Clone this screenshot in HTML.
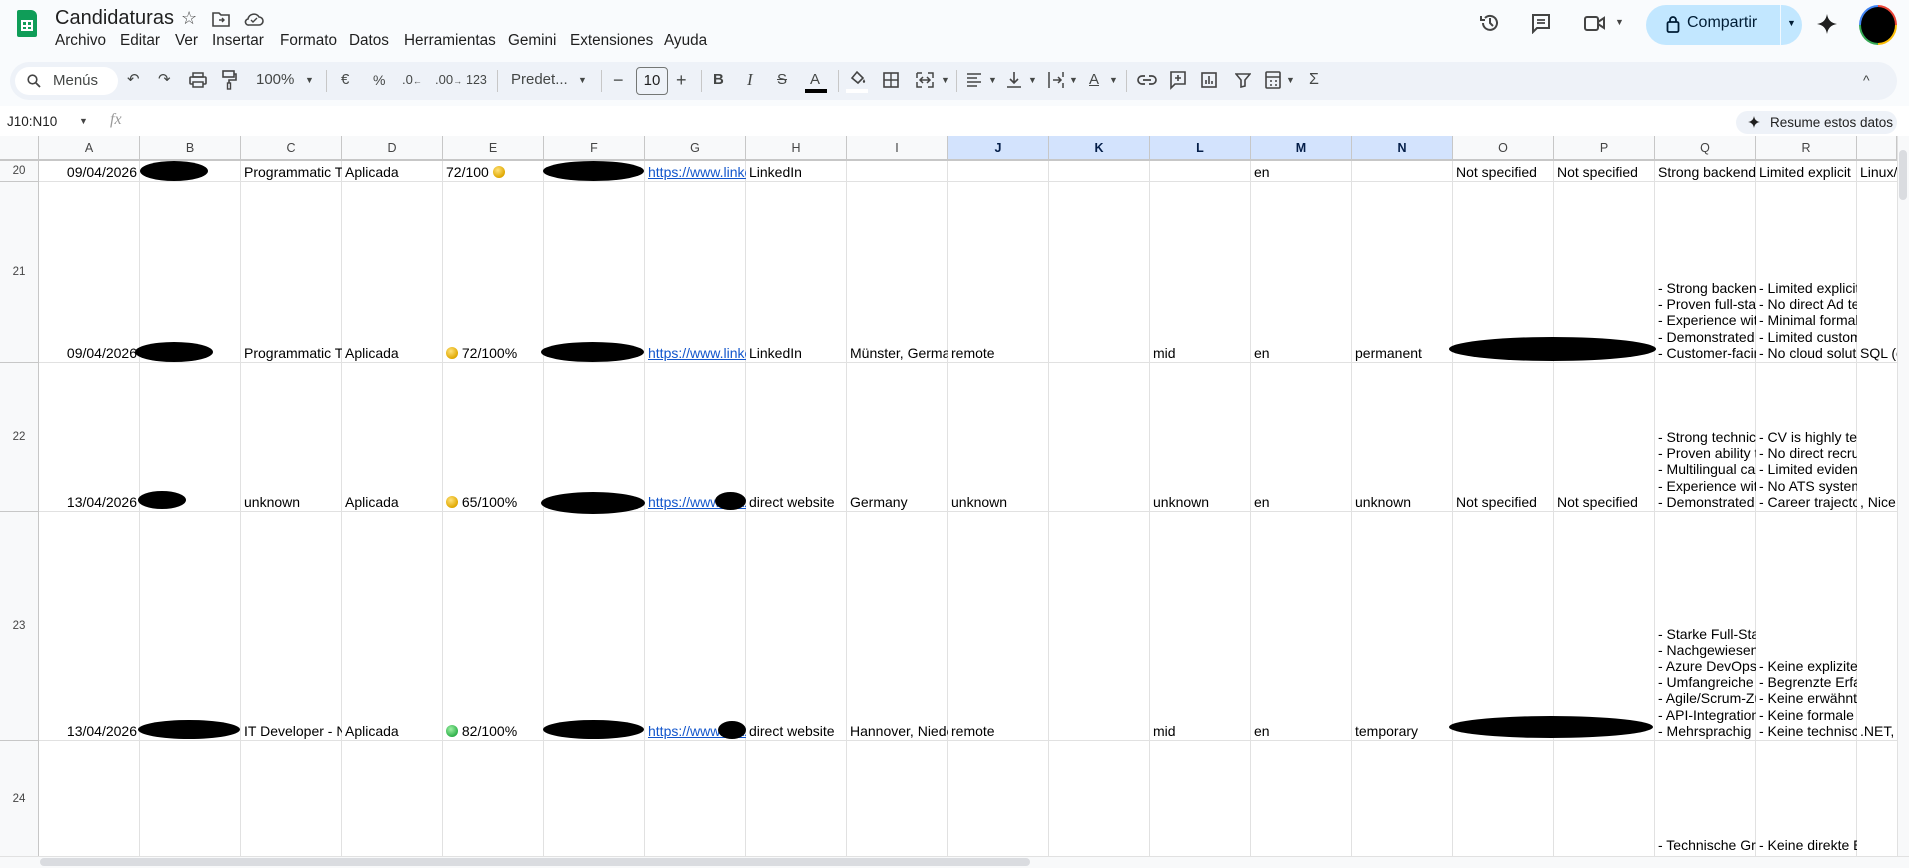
<!DOCTYPE html>
<html><head><meta charset="utf-8"><style>
*{box-sizing:border-box;margin:0;padding:0}
body{width:1909px;height:868px;overflow:hidden;background:#f9fbfd;font-family:"Liberation Sans",Arial,sans-serif;position:relative;color:#1f1f1f}
.a{position:absolute}
.mn{position:absolute;top:32px;font-size:15.3px;color:#1f1f1f}
.tb{position:absolute;top:68px;font-size:15px;color:#444746;line-height:24px;text-align:center}
.dd{position:absolute;top:68px;font-size:9px;color:#444746;line-height:24px}
.sep{position:absolute;top:70px;width:1px;height:22px;background:#c7c7c7}
.ch{position:absolute;top:136px;height:24px;width:101px;text-align:center;font-size:12.5px;color:#444;line-height:24px;border-right:1px solid #c7c7c7;background:#f8f9fa}
.ch.s{background:#d3e3fd;color:#041e49;font-weight:bold}
.rn{position:absolute;left:0;width:39px;font-size:11.5px;color:#444;display:flex;align-items:center;justify-content:center;background:#f8f9fa;border-right:1px solid #c7c7c7;border-bottom:1px solid #c7c7c7}
.c{position:absolute;width:101px;overflow:hidden;white-space:pre;display:flex;flex-direction:column;justify-content:flex-end;padding:0 3px 1px;line-height:16.2px;font-size:14px;color:#000}
.r{text-align:right}
.l{color:#1155cc;text-decoration:underline}
.b{position:absolute;background:#000;border-radius:50%}
.coin{display:inline-block;width:12px;height:12px;border-radius:50%;background:radial-gradient(circle at 40% 35%,#ffe27a,#e0a800 70%,#b88400);vertical-align:-1px}
.coin.g{background:radial-gradient(circle at 40% 35%,#9ef0a5,#2fb14a 70%,#1d7d33)}
.hl{position:absolute;left:0;width:1897px;height:1px;background:#e1e1e1}
</style></head><body>
<div class="a" style="left:17px;top:10px;width:20px;height:27px;background:#0f9d58;border-radius:2px 6px 2px 2px"></div>
<div class="a" style="left:21px;top:20px;width:12px;height:11px;border:2px solid #fff;background:linear-gradient(#fff,#fff) center/2px 100% no-repeat,linear-gradient(#fff,#fff) center/100% 2px no-repeat"></div>
<div class="a" style="left:55px;top:7px;font-size:20px;color:#1f1f1f">Candidaturas</div>
<div class="a" style="left:181px;top:8px;font-size:18px;color:#444">☆</div>
<svg class="a" style="left:212px;top:11px" width="18" height="16" viewBox="0 0 18 16"><path d="M1 2h6l2 2h8v11H1z" fill="none" stroke="#444" stroke-width="1.6"/><path d="M7 9h5M10 7l2 2-2 2" stroke="#444" stroke-width="1.4" fill="none"/></svg>
<svg class="a" style="left:244px;top:11px" width="20" height="16" viewBox="0 0 20 16"><path d="M5 14h10a4 4 0 0 0 0-8 6 6 0 0 0-11 2 3 3 0 0 0 1 6z" fill="none" stroke="#444" stroke-width="1.6"/><path d="M7 9l2 2 4-4" stroke="#444" stroke-width="1.4" fill="none"/></svg>
<div class="mn" style="left:55px">Archivo</div><div class="mn" style="left:120px">Editar</div><div class="mn" style="left:175px">Ver</div><div class="mn" style="left:212px">Insertar</div><div class="mn" style="left:280px">Formato</div><div class="mn" style="left:349px">Datos</div><div class="mn" style="left:404px">Herramientas</div><div class="mn" style="left:508px">Gemini</div><div class="mn" style="left:570px">Extensiones</div><div class="mn" style="left:664px">Ayuda</div>
<svg class="a" style="left:1479px;top:12px" width="22" height="22" viewBox="0 0 22 22"><path d="M4 11a7 7 0 1 0 2-5" fill="none" stroke="#444" stroke-width="2"/><path d="M2 4v4h4" fill="none" stroke="#444" stroke-width="2"/><path d="M11 6v5l3 3" fill="none" stroke="#444" stroke-width="2"/></svg>
<svg class="a" style="left:1530px;top:12px" width="22" height="22" viewBox="0 0 22 22"><path d="M3 3h16v13H7l-4 4z" fill="none" stroke="#444" stroke-width="2"/><path d="M7 8h8M7 11h8" stroke="#444" stroke-width="1.8"/></svg>
<svg class="a" style="left:1583px;top:14px" width="24" height="18" viewBox="0 0 24 18"><rect x="2" y="3" width="13" height="13" rx="2" fill="none" stroke="#444" stroke-width="2"/><path d="M15 8l6-4v10l-6-4" fill="none" stroke="#444" stroke-width="2"/></svg>
<div class="a" style="left:1615px;top:17px;font-size:9px;color:#444">▼</div>
<div class="a" style="left:1646px;top:5px;width:156px;height:40px;border-radius:20px;background:#c2e7ff"></div>
<div class="a" style="left:1780px;top:5px;width:1px;height:40px;background:#f0f8ff"></div>
<svg class="a" style="left:1666px;top:15px" width="14" height="18" viewBox="0 0 14 18"><rect x="1.5" y="7" width="11" height="10" rx="1.5" fill="none" stroke="#001d35" stroke-width="1.8"/><path d="M4 7V5a3 3 0 0 1 6 0v2" fill="none" stroke="#001d35" stroke-width="1.8"/></svg>
<div class="a" style="left:1687px;top:14px;font-size:16px;color:#001d35">Compartir</div>
<div class="a" style="left:1787px;top:18px;font-size:9px;color:#001d35">▼</div>
<svg class="a" style="left:1817px;top:14px" width="20" height="20" viewBox="0 0 20 20"><path d="M10 0C11 6 14 9 20 10 14 11 11 14 10 20 9 14 6 11 0 10 6 9 9 6 10 0z" fill="#1f1f1f"/></svg>
<div class="a" style="left:1859px;top:5px;width:38px;height:40px;border-radius:50%;background:conic-gradient(#ea4335 0 25%,#fbbc04 0 50%,#34a853 0 75%,#4285f4 0)"></div>
<div class="a" style="left:1861px;top:7px;width:34px;height:36px;border-radius:50%;background:#000"></div>
<div class="a" style="left:10px;top:62px;width:1887px;height:38px;border-radius:19px;background:#eef2f8"></div>
<div class="a" style="left:15px;top:67px;width:103px;height:28px;border-radius:14px;background:#fff"></div>
<svg class="a" style="left:27px;top:74px" width="14" height="14" viewBox="0 0 14 14"><circle cx="5.5" cy="5.5" r="4.3" fill="none" stroke="#444" stroke-width="1.6"/><path d="M9 9l4 4" stroke="#444" stroke-width="1.8"/></svg>
<div class="tb" style="left:53px;top:69px">Menús</div>
<div class="tb" style="left:127px">↶</div><div class="tb" style="left:158px">↷</div>
<svg class="a" style="left:189px;top:72px" width="18" height="16" viewBox="0 0 18 16"><rect x="1" y="5" width="16" height="7" rx="1" fill="none" stroke="#444" stroke-width="1.6"/><rect x="4" y="1" width="10" height="4" fill="none" stroke="#444" stroke-width="1.5"/><rect x="4" y="10" width="10" height="5" fill="#eef2f8" stroke="#444" stroke-width="1.5"/></svg>
<svg class="a" style="left:221px;top:70px" width="16" height="20" viewBox="0 0 16 20"><rect x="2" y="1" width="11" height="6" fill="none" stroke="#444" stroke-width="1.6"/><path d="M13 4h2v6H8v3" fill="none" stroke="#444" stroke-width="1.6"/><rect x="6.5" y="13" width="3" height="6" fill="none" stroke="#444" stroke-width="1.4"/></svg>
<div class="tb" style="left:256px">100%</div><div class="dd" style="left:305px">▼</div>
<div class="sep" style="left:326px"></div>
<div class="tb" style="left:341px">€</div><div class="tb" style="left:373px;font-size:14px">%</div>
<div class="tb" style="left:402px;font-size:13px">.0<span style="font-size:9px">←</span></div>
<div class="tb" style="left:435px;font-size:13px">.00<span style="font-size:9px">→</span></div>
<div class="tb" style="left:466px;font-size:12.5px">123</div>
<div class="sep" style="left:497px"></div>
<div class="tb" style="left:511px">Predet...</div><div class="dd" style="left:578px">▼</div>
<div class="sep" style="left:601px"></div>
<div class="tb" style="left:613px;font-size:18px">−</div>
<div class="a" style="left:636px;top:67px;width:32px;height:28px;border:1px solid #747775;border-radius:4px;font-size:15px;text-align:center;line-height:26px;color:#1f1f1f">10</div>
<div class="tb" style="left:676px;font-size:18px">+</div>
<div class="sep" style="left:701px"></div>
<div class="tb" style="left:713px;font-weight:bold">B</div>
<div class="tb" style="left:747px;font-style:italic;font-family:'Liberation Serif',serif;font-size:17px">I</div>
<div class="tb" style="left:777px;text-decoration:line-through">S</div>
<div class="tb" style="left:810px">A</div><div class="a" style="left:805px;top:89px;width:22px;height:4px;background:#000"></div>
<div class="sep" style="left:838px"></div>
<svg class="a" style="left:849px;top:70px" width="18" height="16" viewBox="0 0 18 16"><path d="M3 8l5-6 6 6-5 5z" fill="none" stroke="#444" stroke-width="1.6"/><path d="M15 9c1 2 2 3 0 4-2-1-1-2 0-4z" fill="#444"/></svg>
<div class="a" style="left:846px;top:89px;width:22px;height:4px;background:#fff"></div>
<svg class="a" style="left:883px;top:72px" width="16" height="16" viewBox="0 0 16 16"><rect x="1" y="1" width="14" height="14" fill="none" stroke="#444" stroke-width="1.6"/><path d="M8 1v14M1 8h14" stroke="#444" stroke-width="1.4"/></svg>
<svg class="a" style="left:916px;top:72px" width="18" height="16" viewBox="0 0 18 16"><path d="M1 1h5M12 1h5v5M17 10v5h-5M6 15H1v-5M1 6V1M4 8h10M11 5l3 3-3 3M7 5L4 8l3 3" fill="none" stroke="#444" stroke-width="1.5"/></svg>
<div class="dd" style="left:941px">▼</div>
<div class="sep" style="left:956px"></div>
<svg class="a" style="left:966px;top:72px" width="16" height="16" viewBox="0 0 16 16"><path d="M1 2h14M1 6h10M1 10h14M1 14h10" stroke="#444" stroke-width="1.6"/></svg><div class="dd" style="left:988px">▼</div>
<svg class="a" style="left:1006px;top:71px" width="16" height="18" viewBox="0 0 16 18"><path d="M8 1v11M4 8l4 4 4-4M1 16h14" fill="none" stroke="#444" stroke-width="1.6"/></svg><div class="dd" style="left:1028px">▼</div>
<svg class="a" style="left:1047px;top:71px" width="18" height="18" viewBox="0 0 18 18"><path d="M2 1v16M6 9h8M11 6l3 3-3 3M16 1v5M16 12v5" fill="none" stroke="#444" stroke-width="1.5"/></svg><div class="dd" style="left:1069px">▼</div>
<div class="tb" style="left:1089px;text-decoration:underline">A</div><div class="dd" style="left:1109px">▼</div>
<div class="sep" style="left:1126px"></div>
<svg class="a" style="left:1137px;top:74px" width="20" height="12" viewBox="0 0 20 12"><path d="M8 2H5a4 4 0 0 0 0 8h3M12 2h3a4 4 0 0 1 0 8h-3M6 6h8" fill="none" stroke="#444" stroke-width="1.7"/></svg>
<svg class="a" style="left:1169px;top:70px" width="18" height="20" viewBox="0 0 18 20"><path d="M2 2h14v12H6l-4 4z" fill="none" stroke="#444" stroke-width="1.6"/><path d="M9 5v6M6 8h6" stroke="#444" stroke-width="1.6"/></svg>
<svg class="a" style="left:1201px;top:72px" width="16" height="16" viewBox="0 0 16 16"><rect x="1" y="1" width="14" height="14" fill="none" stroke="#444" stroke-width="1.6"/><path d="M5 12V8M8 12V4M11 12V9" stroke="#444" stroke-width="1.6"/></svg>
<svg class="a" style="left:1235px;top:72px" width="16" height="16" viewBox="0 0 16 16"><path d="M1 2h14L10 8v6l-4 1V8z" fill="none" stroke="#444" stroke-width="1.6"/></svg>
<svg class="a" style="left:1264px;top:71px" width="18" height="18" viewBox="0 0 18 18"><rect x="2" y="1" width="14" height="16" rx="1" fill="none" stroke="#444" stroke-width="1.6"/><path d="M2 6h14M6 10h2M11 10h2M6 14h2M11 14h2" stroke="#444" stroke-width="1.6"/></svg><div class="dd" style="left:1286px">▼</div>
<div class="tb" style="left:1309px;font-size:16px">Σ</div>
<div class="tb" style="left:1863px;font-size:14px">^</div>
<div class="a" style="left:0;top:106px;width:1909px;height:30px;background:#fff"></div>
<div class="a" style="left:7px;top:114px;font-size:13.5px;color:#1f1f1f">J10:N10</div>
<div class="a" style="left:79px;top:116px;font-size:9px;color:#444">▼</div>
<div class="a" style="left:110px;top:111px;font-size:16px;color:#999;font-style:italic;font-family:'Liberation Serif',serif">fx</div>
<div class="a" style="left:1736px;top:111px;width:161px;height:23px;border-radius:12px;background:#eef2f8;font-size:13.5px;line-height:23px;padding-left:34px;color:#1f1f1f">Resume estos datos</div>
<svg class="a" style="left:1748px;top:116px" width="12" height="12" viewBox="0 0 20 20"><path d="M10 0C11 6 14 9 20 10 14 11 11 14 10 20 9 14 6 11 0 10 6 9 9 6 10 0z" fill="#1f1f1f"/></svg>
<div class="a" style="left:0;top:136px;width:1897px;height:720px;background:#fff"></div>
<div class="a" style="left:39px;top:160px;width:1858px;height:700px;background:repeating-linear-gradient(90deg,transparent 0 100px,#e1e1e1 100px 101px)"></div>
<div class="a" style="left:0;top:136px;width:39px;height:24px;background:#f8f9fa;border-right:1px solid #c7c7c7"></div>
<div class="ch" style="left:39px">A</div><div class="ch" style="left:140px">B</div><div class="ch" style="left:241px">C</div><div class="ch" style="left:342px">D</div><div class="ch" style="left:443px">E</div><div class="ch" style="left:544px">F</div><div class="ch" style="left:645px">G</div><div class="ch" style="left:746px">H</div><div class="ch" style="left:847px">I</div><div class="ch s" style="left:948px">J</div><div class="ch s" style="left:1049px">K</div><div class="ch s" style="left:1150px">L</div><div class="ch s" style="left:1251px">M</div><div class="ch s" style="left:1352px">N</div><div class="ch" style="left:1453px">O</div><div class="ch" style="left:1554px">P</div><div class="ch" style="left:1655px">Q</div><div class="ch" style="left:1756px">R</div><div class="ch" style="left:1857px;width:40px"></div>
<div class="a" style="left:0;top:159px;width:1897px;height:2px;background:#c7c7c7"></div>
<div class="hl" style="top:181px"></div><div class="hl" style="top:362px"></div><div class="hl" style="top:511px"></div><div class="hl" style="top:740px"></div>
<div class="rn" style="top:161px;height:21px">20</div>
<div class="rn" style="top:182px;height:181px">21</div>
<div class="rn" style="top:363px;height:149px">22</div>
<div class="rn" style="top:512px;height:229px">23</div>
<div class="rn" style="top:741px;height:115px;border-bottom:none">24</div>

<div class="c r" style="left:39px;top:161px;height:20px">09/04/2026</div>
<div class="c" style="left:241px;top:161px;height:20px">Programmatic Technical</div>
<div class="c" style="left:342px;top:161px;height:20px">Aplicada</div>
<div class="c" style="left:443px;top:161px;height:20px"><span>72/100 <span class="coin"></span></span></div>
<div class="c l" style="left:645px;top:161px;height:20px">https://www.linkedin</div>
<div class="c" style="left:746px;top:161px;height:20px">LinkedIn</div>
<div class="c" style="left:1251px;top:161px;height:20px">en</div>
<div class="c" style="left:1453px;top:161px;height:20px">Not specified</div>
<div class="c" style="left:1554px;top:161px;height:20px">Not specified</div>
<div class="c" style="left:1655px;top:161px;height:20px">Strong backend</div>
<div class="c" style="left:1756px;top:161px;height:20px">Limited explicit</div>
<div class="c" style="left:1857px;top:161px;height:20px;width:40px">Linux/De</div>
<div class="b" style="left:140px;top:161px;width:68px;height:20px"></div>
<div class="b" style="left:543px;top:161px;width:101px;height:20px"></div>

<div class="c r" style="left:39px;top:182px;height:180px">09/04/2026</div>
<div class="c" style="left:241px;top:182px;height:180px">Programmatic Technical</div>
<div class="c" style="left:342px;top:182px;height:180px">Aplicada</div>
<div class="c" style="left:443px;top:182px;height:180px"><span><span class="coin"></span> 72/100%</span></div>
<div class="c l" style="left:645px;top:182px;height:180px">https://www.linkedin</div>
<div class="c" style="left:746px;top:182px;height:180px">LinkedIn</div>
<div class="c" style="left:847px;top:182px;height:180px">Münster, Germany</div>
<div class="c" style="left:948px;top:182px;height:180px">remote</div>
<div class="c" style="left:1150px;top:182px;height:180px">mid</div>
<div class="c" style="left:1251px;top:182px;height:180px">en</div>
<div class="c" style="left:1352px;top:182px;height:180px">permanent</div>
<div class="c" style="left:1655px;top:182px;height:180px">- Strong backend
- Proven full-stack
- Experience with
- Demonstrated p
- Customer-facing</div>
<div class="c" style="left:1756px;top:182px;height:180px">- Limited explicit
- No direct Ad te
- Minimal formal
- Limited custom
- No cloud solution</div>
<div class="c" style="left:1857px;top:182px;height:180px;width:40px">SQL (c</div>
<div class="b" style="left:135px;top:342px;width:78px;height:20px"></div>
<div class="b" style="left:541px;top:342px;width:103px;height:20px"></div>
<div class="b" style="left:1449px;top:337px;width:207px;height:24px"></div>

<div class="c r" style="left:39px;top:363px;height:148px">13/04/2026</div>
<div class="c" style="left:241px;top:363px;height:148px">unknown</div>
<div class="c" style="left:342px;top:363px;height:148px">Aplicada</div>
<div class="c" style="left:443px;top:363px;height:148px"><span><span class="coin"></span> 65/100%</span></div>
<div class="c l" style="left:645px;top:363px;height:148px">https://www.xxxxx</div>
<div class="c" style="left:746px;top:363px;height:148px">direct website</div>
<div class="c" style="left:847px;top:363px;height:148px">Germany</div>
<div class="c" style="left:948px;top:363px;height:148px">unknown</div>
<div class="c" style="left:1150px;top:363px;height:148px">unknown</div>
<div class="c" style="left:1251px;top:363px;height:148px">en</div>
<div class="c" style="left:1352px;top:363px;height:148px">unknown</div>
<div class="c" style="left:1453px;top:363px;height:148px">Not specified</div>
<div class="c" style="left:1554px;top:363px;height:148px">Not specified</div>
<div class="c" style="left:1655px;top:363px;height:148px">- Strong technical
- Proven ability to
- Multilingual cap
- Experience with
- Demonstrated p</div>
<div class="c" style="left:1756px;top:363px;height:148px">- CV is highly tec
- No direct recrui
- Limited evidence
- No ATS system
- Career trajecto</div>
<div class="c" style="left:1857px;top:363px;height:148px;width:40px">, Nice t</div>
<div class="b" style="left:138px;top:491px;width:48px;height:18px"></div>
<div class="b" style="left:541px;top:492px;width:104px;height:22px"></div>
<div class="b" style="left:715px;top:492px;width:31px;height:18px"></div>

<div class="c r" style="left:39px;top:512px;height:228px">13/04/2026</div>
<div class="c" style="left:241px;top:512px;height:228px">IT Developer - Niedersachsen</div>
<div class="c" style="left:342px;top:512px;height:228px">Aplicada</div>
<div class="c" style="left:443px;top:512px;height:228px"><span><span class="coin g"></span> 82/100%</span></div>
<div class="c l" style="left:645px;top:512px;height:228px">https://www.xxxxx</div>
<div class="c" style="left:746px;top:512px;height:228px">direct website</div>
<div class="c" style="left:847px;top:512px;height:228px">Hannover, Niedersachsen</div>
<div class="c" style="left:948px;top:512px;height:228px">remote</div>
<div class="c" style="left:1150px;top:512px;height:228px">mid</div>
<div class="c" style="left:1251px;top:512px;height:228px">en</div>
<div class="c" style="left:1352px;top:512px;height:228px">temporary</div>
<div class="c" style="left:1655px;top:512px;height:228px">- Starke Full-Stack
- Nachgewiesene
- Azure DevOps
- Umfangreiche T
- Agile/Scrum-Zu
- API-Integration
- Mehrsprachig (</div>
<div class="c" style="left:1756px;top:512px;height:228px">- Keine explizite
- Begrenzte Erfa
- Keine erwähnte
- Keine formale S
- Keine technisch</div>
<div class="c" style="left:1857px;top:512px;height:228px;width:40px">.NET, R</div>
<div class="b" style="left:138px;top:720px;width:102px;height:19px"></div>
<div class="b" style="left:543px;top:720px;width:101px;height:19px"></div>
<div class="b" style="left:718px;top:721px;width:28px;height:18px"></div>
<div class="b" style="left:1449px;top:716px;width:204px;height:22px"></div>

<div class="c" style="left:1655px;top:741px;height:113px">- Technische Gru</div>
<div class="c" style="left:1756px;top:741px;height:113px">- Keine direkte E</div>

<div class="a" style="left:0;top:856px;width:1909px;height:12px;background:#f8f9fa;border-top:1px solid #e1e1e1"></div>
<div class="a" style="left:40px;top:858px;width:990px;height:8px;border-radius:4px;background:#dadce0"></div>
<div class="a" style="left:1897px;top:136px;width:12px;height:720px;background:#f8f9fa;border-left:1px solid #e1e1e1"></div>
<div class="a" style="left:1899px;top:150px;width:8px;height:50px;border-radius:4px;background:#dadce0"></div>
</body></html>
